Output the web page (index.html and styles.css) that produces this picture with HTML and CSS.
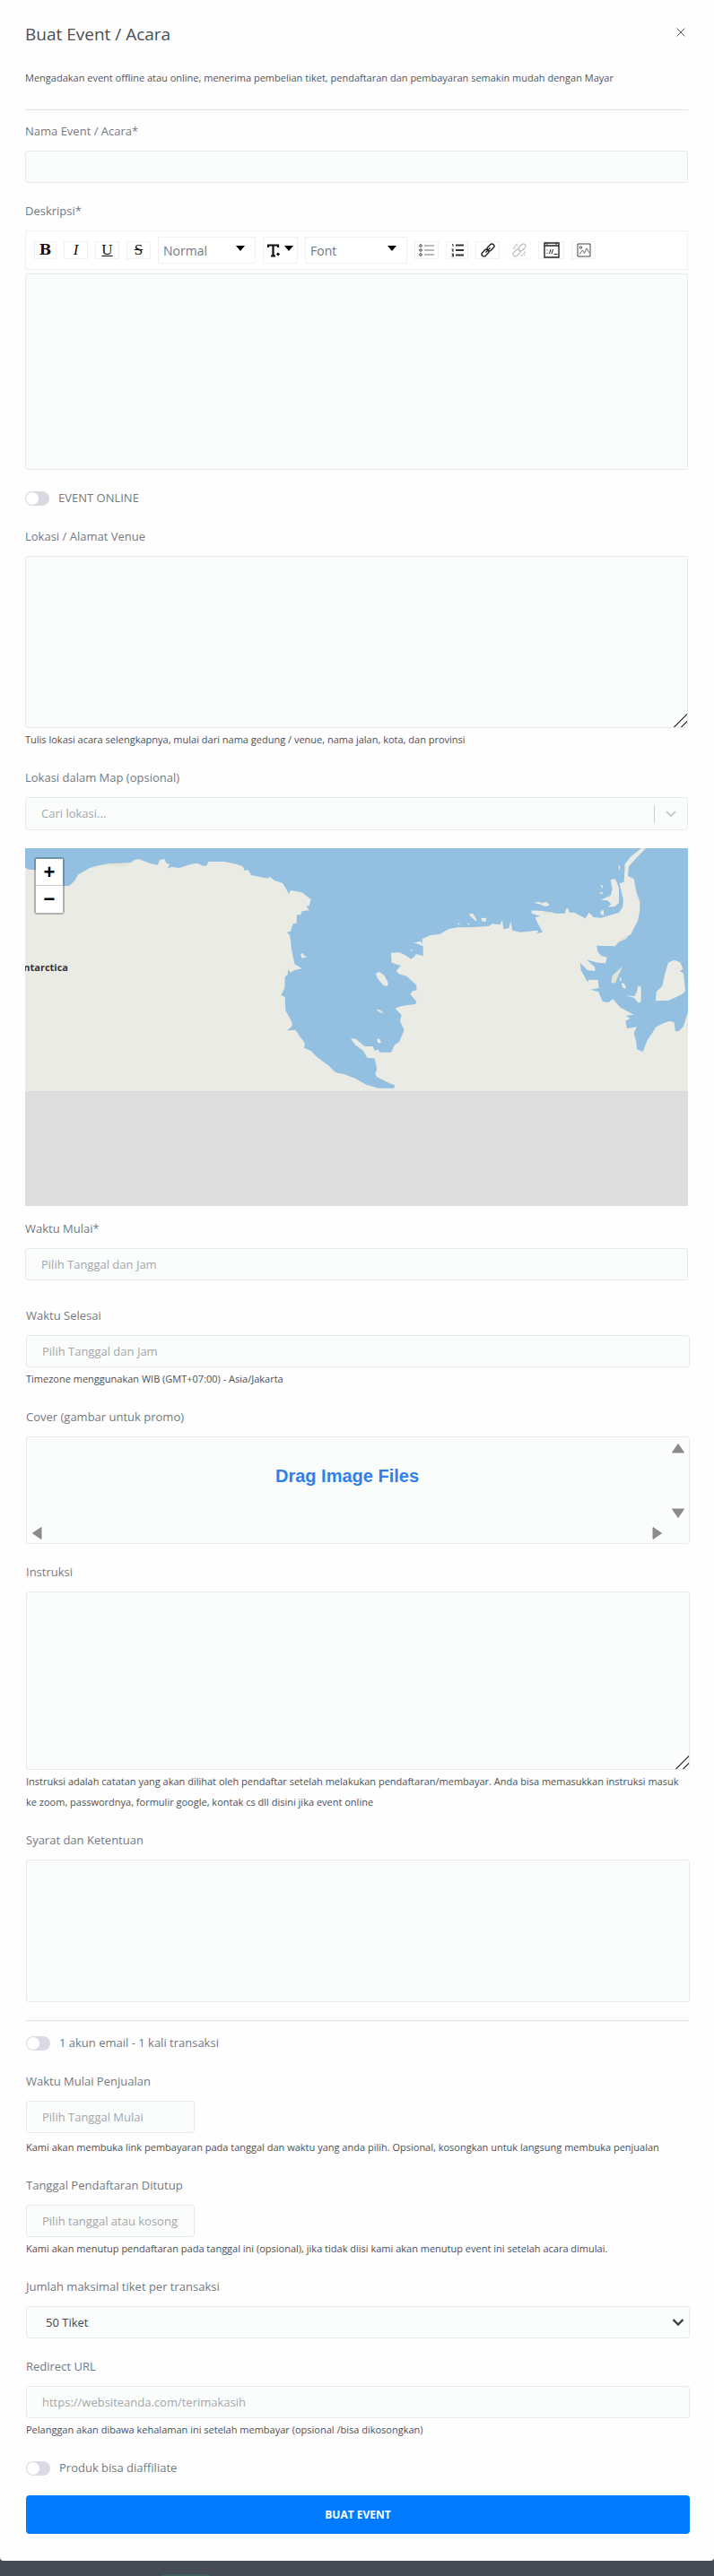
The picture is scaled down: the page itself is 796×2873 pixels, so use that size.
FILE: index.html
```html
<!DOCTYPE html>
<html lang="id">
<head>
<meta charset="utf-8">
<meta name="viewport" content="width=device-width, initial-scale=1">
<title>Buat Event / Acara</title>
<link rel="stylesheet" href="styles.css">
</head>
<body>
<main class="modal">
  <header class="modal-header">
    <h1 class="title">Buat Event / Acara</h1>
    <button class="close" type="button" aria-label="Tutup">
      <svg width="12" height="12" viewBox="0 0 12 12"><path d="M1.500 1.500l9 9M10.500 1.500l-9 9" stroke="#555a61" stroke-width="1" fill="none"/></svg>
    </button>
  </header>
  <form class="form">
    <section class="section section-main">
      <p class="intro">Mengadakan event offline atau online, menerima pembelian tiket, pendaftaran dan pembayaran semakin mudah dengan Mayar</p>
      <hr class="rule">

      <div class="field field-first">
        <label class="label" for="name">Nama Event / Acara*</label>
        <input class="control" id="name" type="text">
      </div>

      <div class="field">
        <label class="label" for="desc">Deskripsi*</label>
        <div class="toolbar">
          <button class="tool tool-bold" type="button" aria-label="Bold">B</button>
          <button class="tool tool-italic" type="button" aria-label="Italic">I</button>
          <button class="tool tool-under" type="button" aria-label="Underline">U</button>
          <button class="tool tool-strike" type="button" aria-label="Strikethrough">S</button>
          <div class="picker picker-block">
            <select class="picker-select" aria-label="Jenis blok"><option>Normal</option></select>
            <svg class="caret" width="10" height="6" viewBox="0 0 10 6"><path d="M0 0h10L5 6z"/></svg>
          </div>
          <button class="tool tool-size" type="button" aria-label="Ukuran huruf">
            <svg width="14" height="15" viewBox="0 0 14 15"><path d="M1 4V1.500h11V4M6.500 1.500V13M4 13.500h5" stroke="#111" stroke-width="2.200" fill="none"/><path d="M12 9.500l2 2-2 2-2-2z"/></svg>
            <svg class="caret" width="10" height="6" viewBox="0 0 10 6"><path d="M0 0h10L5 6z"/></svg>
          </button>
          <div class="picker picker-font">
            <select class="picker-select" aria-label="Font"><option>Font</option></select>
            <svg class="caret" width="10" height="6" viewBox="0 0 10 6"><path d="M0 0h10L5 6z"/></svg>
          </div>
          <button class="tool" type="button" aria-label="Daftar">
            <svg width="17" height="16" viewBox="0 0 17 16" fill="none" stroke="#777"><path d="M6 3h11M6 8h11M6 13h11" stroke-width="1.200"/><g stroke="#444"><circle cx="2" cy="3" r="1.300"/><circle cx="2" cy="8" r="1.300"/><circle cx="2" cy="13" r="1.300"/></g></svg>
          </button>
          <button class="tool tool-narrow" type="button" aria-label="Daftar bernomor">
            <svg width="14" height="16" viewBox="0 0 14 16" fill="none" stroke="#333"><path d="M5 2.500h9M5 8h9M5 13.500h9" stroke-width="1.800"/><path d="M1 1.500h1V4M.5 7h2L1 9h2M.5 12h2v1.300h-1.500h1.500V15h-2"/></svg>
          </button>
          <button class="tool" type="button" aria-label="Tautan">
            <svg width="16" height="16" viewBox="0 0 16 16" fill="none" stroke="#222" stroke-width="1.400"><rect x="6.500" y="2.500" width="9" height="5" rx="2.500" transform="rotate(-45 11 5)"/><rect x=".5" y="8.500" width="9" height="5" rx="2.500" transform="rotate(-45 5 11)"/><path d="M5.500 10.500l5-5"/></svg>
          </button>
          <button class="tool tool-off" type="button" aria-label="Hapus tautan" disabled>
            <svg width="16" height="16" viewBox="0 0 16 16" fill="none" stroke="#333" stroke-width="1.300"><rect x="6.500" y="2.500" width="9" height="5" rx="2.500" transform="rotate(-45 11 5)"/><rect x=".5" y="8.500" width="9" height="5" rx="2.500" transform="rotate(-45 5 11)"/><path d="M2 3l2 1M4.500 1l.8 2M1 6h2M12 12l2 1.500M10.500 13v2M13 10.500h2"/></svg>
          </button>
          <button class="tool tool-wide" type="button" aria-label="Sematkan">
            <svg width="18" height="18" viewBox="0 0 18 18" fill="none" stroke="#222"><path d="M1 1h16v16H1zM1 4h16" stroke-width="1.400"/><path d="M4 1v2M14 1v2M4 8.500v1M4 12v1M8 8l-1.500 5M10.500 8L9 13M11.500 13.500h4"/></svg>
          </button>
          <button class="tool" type="button" aria-label="Gambar">
            <svg width="16" height="16" viewBox="0 0 16 16" fill="none" stroke="#444"><path d="M1 1h14v14H1z"/><circle cx="4.500" cy="5" r="1.200"/><path d="M3 12.500L6.500 8l2 3.500L11 6l3 5" stroke-width=".8"/></svg>
          </button>
        </div>
        <textarea class="control editor" id="desc"></textarea>
      </div>

      <label class="switch-row"><input class="switch" type="checkbox">EVENT ONLINE</label>

      <div class="field">
        <label class="label" for="venue">Lokasi / Alamat Venue</label>
        <textarea class="control venue" id="venue"></textarea>
        <p class="help">Tulis lokasi acara selengkapnya, mulai dari nama gedung / venue, nama jalan, kota, dan provinsi</p>
      </div>

      <div class="field">
        <label class="label" for="place">Lokasi dalam Map (opsional)</label>
        <div class="search">
          <input class="search-input" id="place" type="text" placeholder="Cari lokasi...">
          <button class="search-toggle" type="button" aria-label="Buka pilihan">
            <svg width="12" height="8" viewBox="0 0 12 8"><path d="M1 1l5 5 5-5" fill="none" stroke="#c9cccc" stroke-width="2"/></svg>
          </button>
        </div>
      </div>

      <div class="map">
        <svg class="map-art" viewBox="84 47 2217 1198" preserveAspectRatio="xMinYMin slice" role="img" aria-label="Peta Antarctica">
          <path fill="#93c0e0" d="M84 47H2301V861H84z"/>
          <g fill="#ebebe6">
            <path d="M84 112L95 118 118 120 160 150 216 174 233 172 250 155 262 135 280 125 300 113 330 105 360 100 430 100 450 86 465 84 500 97 527 103 535 86 550 83 556 97 568 100 560 114 575 110 600 113 640 100 660 97 680 107 692 105 697 92 750 92 790 100 812 108 818 122 830 120 840 137 895 148 903 143 918 155 945 164 955 180 966 200 972 188 1010 195 1040 218 1034 240 1024 240 1034 255 1010 258 1006 270 993 270 992 298 980 300 972 325 960 328 970 340 975 385 985 435 1010 450 985 455 972 463 964 452 962 470 953 478 952 515 940 538 953 545 955 590 978 632 975 645 960 657 988 655 1005 680 1020 700 1017 715 1040 725 1060 745 1100 775 1122 797 1150 803 1188 817 1225 838 1265 850 1318 850 1320 840 1300 832 1260 812 1255 800 1260 790 1258 770 1252 750 1228 748 1215 725 1188 705 1173 684 1190 685 1220 710 1247 710 1253 725 1265 720 1270 730 1308 730 1320 705 1335 695 1352 655 1338 625 1343 605 1322 583 1340 576 1390 568 1393 560 1372 535 1380 525 1393 522 1393 505 1360 475 1335 468 1325 458 1340 440 1310 430 1308 397 1335 395 1355 405 1375 418 1395 402 1415 408 1415 375 1385 362 1413 365 1412 350 1440 338 1470 335 1500 318 1530 312 1570 312 1635 308 1645 300 1672 303 1680 288 1684 318 1702 315 1708 292 1714 322 1740 328 1800 322 1797 332 1815 328 1797 295 1790 278 1808 275 1778 265 1778 255 1820 258 1860 265 1890 265 1893 250 1900 248 1904 262 1920 262 1958 282 1970 262 1985 278 2010 280 2070 262 2082 245 2085 220 2072 165 2087 160 2090 100 2110 75 2145 47 2160 47 2128 80 2103 108 2100 140 2120 150 2130 200 2140 225 2140 255 2133 290 2125 305 2110 335 2075 355 2057 375 1995 373 2000 395 2012 408 2030 412 2025 432 2000 430 1961 420 1990 445 1990 458 1965 455 1940 430 1943 455 1965 495 1970 487 2000 488 2003 515 1975 520 2002 528 2015 560 2035 563 2050 552 2075 580 2120 604 2092 608 2108 616 2092 625 2097 650 2130 645 2120 665 2128 695 2130 720 2150 728 2165 690 2195 645 2215 634 2240 625 2255 630 2258 658 2268 660 2285 645 2301 595 2301 861H84z"/>
            <path d="M1005 400l8-2 4 8 11 3-10 4-8 3zM1256 468l12-8 18 14 12 22-2 12-14-2-18-22zM1258 588l10-1 16 11-12-1zM1262 684l8 1 5 12-8 3-6-8zM1570 266l12 0 12 20-3 5-20-18zM1609 281l18-1-3 14-12-3zM1530 298l8 0-2 6zM1563 298l8 1-4 5zM1785 229l20-3 4 5 18-4 12 10-14 5-22-8zM2042 152l16-2 12 30 0 50-14 12-22 2 10-10-12-12-22-2 16-8 16-6 6-22zM2008 170l10 3-4 8zM2004 196l12-2-3 8zM2013 255l6 0 0 18-12-8zM2068 105l6 2-2 16zM2092 540l30 2 8-15 4-20 10 4 0 48-8 6-16-18zM2078 498l10 2 6 14-4 3-8-5zM2072 480l6 3 0 10-4-3zM2193 558l2-30 20-20 8-38 12-40 20-9 20 8 9 22-11 8 13 6 6 60-10 10-45 21zM1372 384l8 4-5 3zM1388 402l8 2-4 5zM1384 364l20-6 10 8-12 1z"/>
            <path fill="#e1e4d4" d="M2044 495l4-22 26-23 8-7-10 22-14 32-10 2zM340 104l20-5 80-4-18 13zM1816 264l30-4-2 6-20 2zM2060 362l40-20 8-9-14 18-34 14z"/>
          </g>
          <path fill="#ddd" d="M84 861H2301V1245H84z"/>
          <text class="map-label" x="228" y="457">Antarctica</text>
        </svg>
        <div class="zoom">
          <button class="zoom-button" type="button" aria-label="Perbesar">+</button>
          <button class="zoom-button" type="button" aria-label="Perkecil">−</button>
        </div>
      </div>

      <div class="field field-start">
        <label class="label" for="start">Waktu Mulai*</label>
        <input class="control" id="start" type="text" placeholder="Pilih Tanggal dan Jam">
      </div>
    </section>

    <section class="section section-detail">
      <div class="field">
        <label class="label" for="end">Waktu Selesai</label>
        <input class="control" id="end" type="text" placeholder="Pilih Tanggal dan Jam">
        <p class="help">Timezone menggunakan WIB (GMT+07:00) - Asia/Jakarta</p>
      </div>

      <div class="field">
        <span class="label">Cover (gambar untuk promo)</span>
        <div class="cover">
          <strong class="cover-text">Drag Image Files</strong>
          <div class="scroll-y">
            <svg width="16" height="12" viewBox="0 0 16 12"><path d="M8 1.500L14.500 11h-13z"/></svg>
            <svg width="16" height="12" viewBox="0 0 16 12"><path d="M8 10.500L14.500 1h-13z"/></svg>
          </div>
          <div class="scroll-x">
            <svg width="12" height="16" viewBox="0 0 12 16"><path d="M1.500 8L11 1.500v13z"/></svg>
            <svg width="12" height="16" viewBox="0 0 12 16"><path d="M10.500 8L1 1.500v13z"/></svg>
          </div>
        </div>
      </div>

      <div class="field">
        <label class="label" for="notes">Instruksi</label>
        <textarea class="control notes" id="notes"></textarea>
        <p class="help">Instruksi adalah catatan yang akan dilihat oleh pendaftar setelah melakukan pendaftaran/membayar. Anda bisa memasukkan instruksi masuk ke zoom, passwordnya, formulir google, kontak cs dll disini jika event online</p>
      </div>

      <div class="field">
        <label class="label" for="terms">Syarat dan Ketentuan</label>
        <textarea class="control terms" id="terms"></textarea>
      </div>

      <hr class="rule rule-detail">

      <label class="switch-row switch-row-tight"><input class="switch" type="checkbox">1 akun email - 1 kali transaksi</label>

      <div class="field">
        <label class="label" for="sale">Waktu Mulai Penjualan</label>
        <input class="control control-short" id="sale" type="text" placeholder="Pilih Tanggal Mulai">
        <p class="help help-spaced">Kami akan membuka link pembayaran pada tanggal dan waktu yang anda pilih. Opsional, kosongkan untuk langsung membuka penjualan</p>
      </div>

      <div class="field">
        <label class="label" for="close">Tanggal Pendaftaran Ditutup</label>
        <input class="control control-short" id="close" type="text" placeholder="Pilih tanggal atau kosongkan">
        <p class="help">Kami akan menutup pendaftaran pada tanggal ini (opsional), jika tidak diisi kami akan menutup event ini setelah acara dimulai.</p>
      </div>

      <div class="field">
        <label class="label" for="max">Jumlah maksimal tiket per transaksi</label>
        <div class="select-wrap">
          <select class="control control-select" id="max"><option>50 Tiket</option></select>
          <svg class="select-arrow" width="14" height="10" viewBox="0 0 14 10"><path d="M1.500 2L7 7.500 12.500 2" fill="none" stroke="#3b3f45" stroke-width="2.400"/></svg>
        </div>
      </div>

      <div class="field">
        <label class="label" for="redirect">Redirect URL</label>
        <input class="control" id="redirect" type="url" placeholder="https://websiteanda.com/terimakasih">
        <p class="help">Pelanggan akan dibawa kehalaman ini setelah membayar (opsional /bisa dikosongkan)</p>
      </div>

      <label class="switch-row"><input class="switch" type="checkbox">Produk bisa diaffiliate</label>

      <button class="submit" type="submit">BUAT EVENT</button>
    </section>
  </form>
</main>
<div class="backdrop"><div class="backdrop-chip"></div></div>
</body>
</html>
```
FILE: styles.css
```css
* {
  box-sizing: border-box;
}

body {
  margin: 0;
  background: #454b55;
  color: #747981;
  font: 13px/23px "Open Sans", "Noto Sans", sans-serif;
}

button,
input,
select,
textarea {
  font: inherit;
  color: inherit;
}

button {
  padding: 0;
  cursor: pointer;
}

.modal {
  padding: 24px 0 30px;
  background: #fefefe;
  border-radius: 0 0 4px 4px;
}

.modal-header {
  display: flex;
  justify-content: space-between;
  align-items: center;
  padding: 0 28px;
}

.title {
  margin: 0;
  color: #495057;
  font-size: 19px;
  font-weight: 400;
  line-height: 28px;
}

.close {
  display: flex;
  padding: 3px;
  margin-bottom: 4px;
  border: 0;
  background: none;
}

.section-main {
  padding: 0 29px 0 28px;
}

.section-detail {
  padding: 8px 27px 0 29px;
}

.intro {
  margin: 23px 0 24px;
  color: #50555d;
  font-size: 11px;
  line-height: 23px;
}

.rule {
  height: 1px;
  margin: 0;
  border: 0;
  background: #e1e3e5;
}

.rule-detail {
  margin-top: 20px;
}

.field {
  display: flex;
  flex-direction: column;
  margin-top: 20px;
}

.field-first {
  margin-top: 12px;
}

.field-start {
  margin-top: 14px;
}

.label {
  margin-bottom: 10px;
}

.control {
  display: block;
  width: 100%;
  height: 36px;
  margin: 0;
  padding: 0 17px;
  border: 1px solid #e6eaec;
  border-radius: 3px;
  outline: 0;
  background: #fbfdfd;
}

::placeholder {
  color: #a3a6a8;
  opacity: 1;
}

.control-short {
  width: 188px;
}

.select-wrap {
  display: grid;
  align-items: center;
}

.control-select,
.select-arrow {
  grid-area: 1 / 1;
}

.control-select {
  padding: 0 24px 0 21px;
  appearance: none;
  color: #40464e;
}

.select-arrow {
  justify-self: end;
  margin-right: 6px;
  pointer-events: none;
}

.editor {
  height: 219px;
  margin-top: 4px;
  resize: none;
}

.venue {
  height: 192px;
  resize: vertical;
}

.notes {
  height: 199px;
  resize: vertical;
}

.notes::-webkit-resizer,
.venue::-webkit-resizer {
  background: linear-gradient(135deg, transparent 47%, #555 47% 54%, transparent 54% 74%, #555 74% 82%, transparent 82%);
}

.terms {
  height: 159px;
  resize: none;
}

.help {
  margin: 1px 0 0;
  color: #4b4f58;
  font-size: 11px;
}

.help-spaced {
  margin-top: 4px;
}

.toolbar {
  display: flex;
  flex-wrap: wrap;
  align-items: center;
  gap: 8px;
  min-height: 44px;
  padding: 6px 9px;
  border: 1px solid #f1f1f1;
  background: #fff;
}

.tool {
  display: flex;
  justify-content: center;
  align-items: center;
  width: 27px;
  height: 20px;
  border: 1px solid #f1f1f1;
  background: #fff;
  color: #111;
  line-height: 16px;
}

.tool-bold {
  width: 25px;
  font: bold 16px/16px "DejaVu Serif", serif;
}

.tool-italic,
.tool-under,
.tool-strike {
  font: 17px/16px "Liberation Serif", serif;
}

.tool-italic {
  font-style: italic;
}

.tool-under {
  text-decoration: underline;
}

.tool-strike {
  text-decoration: line-through;
}

.tool-narrow {
  width: 25px;
}

.tool-wide {
  width: 29px;
}

.tool-size {
  gap: 5px;
  width: 39px;
  height: 30px;
}

.tool-off {
  opacity: 0.3;
}

.caret {
  margin-bottom: 4px;
}

.picker {
  display: flex;
  align-items: center;
  height: 30px;
  padding-right: 11px;
  border: 1px solid #f1f1f1;
}

.picker-block {
  width: 109px;
}

.picker-font {
  width: 114px;
}

.picker-select {
  flex: 1;
  min-width: 0;
  padding: 0 0 0 5px;
  border: 0;
  outline: 0;
  appearance: none;
  background: none;
  font-size: 14px;
}

.switch-row {
  display: flex;
  align-items: center;
  gap: 10px;
  margin-top: 20px;
}

.switch-row-tight {
  margin-top: 13px;
}

.switch {
  display: flex;
  width: 27px;
  height: 16px;
  margin: 0;
  padding: 1px;
  border-radius: 8px;
  appearance: none;
  background: #d8dae1;
}

.switch::before {
  width: 14px;
  height: 14px;
  border-radius: 50%;
  background: #fff;
  content: "";
}

.search {
  display: flex;
  align-items: center;
  height: 37px;
  border: 1px solid #e6eaec;
  border-radius: 4px;
  background: #fbfdfd;
}

.search-input {
  flex: 1;
  min-width: 0;
  padding: 0 17px;
  border: 0;
  outline: 0;
  background: none;
}

.search-toggle {
  display: flex;
  justify-content: center;
  align-items: center;
  width: 37px;
  height: 20px;
  border: 0;
  border-left: 1px solid #ccc;
  background: none;
}

.map {
  position: relative;
  height: 399px;
  margin-top: 20px;
  overflow: hidden;
  background: #ddd;
}

.map-art {
  display: block;
  width: 100%;
  height: 100%;
}

.map-label {
  fill: #333;
  font-size: 33px;
  font-weight: 700;
  text-anchor: end;
}

.zoom {
  position: absolute;
  top: 10px;
  left: 10px;
  border: 2px solid rgba(0, 0, 0, 0.25);
  border-radius: 4px;
  background-clip: padding-box;
}

.zoom-button {
  display: block;
  width: 30px;
  height: 30px;
  border: 0;
  background: #fff;
  color: #000;
  font: bold 22px/28px "Liberation Sans", sans-serif;
}

.zoom-button:first-child {
  border-bottom: 1px solid #ccc;
}

.cover {
  display: grid;
  grid-template-columns: 1fr 24px;
  grid-template-rows: 1fr 22px;
  height: 120px;
  border: 1px solid #e6eaec;
  border-radius: 3px;
  background: #fbfdfd;
  fill: #8b8b8b;
  stroke: #8b8b8b;
  stroke-linejoin: round;
}

.cover-text {
  align-self: center;
  justify-self: center;
  padding-bottom: 10px;
  color: #2f80ed;
  font: bold 20px/23px "Liberation Sans", sans-serif;
}

.scroll-y {
  display: flex;
  flex-direction: column;
  justify-content: space-between;
  align-items: center;
  padding: 6px 0 5px;
}

.scroll-x {
  display: flex;
  justify-content: space-between;
  align-items: center;
  padding: 0 5px;
}

.submit {
  display: block;
  width: 100%;
  height: 43px;
  margin-top: 19px;
  border: 0;
  border-radius: 4px;
  background: #007bff;
  color: #fff;
  font-size: 12px;
  font-weight: 700;
}

.backdrop {
  padding: 15px 0 0 180px;
}

.backdrop-chip {
  width: 54px;
  height: 2px;
  border-radius: 2px 2px 0 0;
  background: #3f5f5a;
}
```
